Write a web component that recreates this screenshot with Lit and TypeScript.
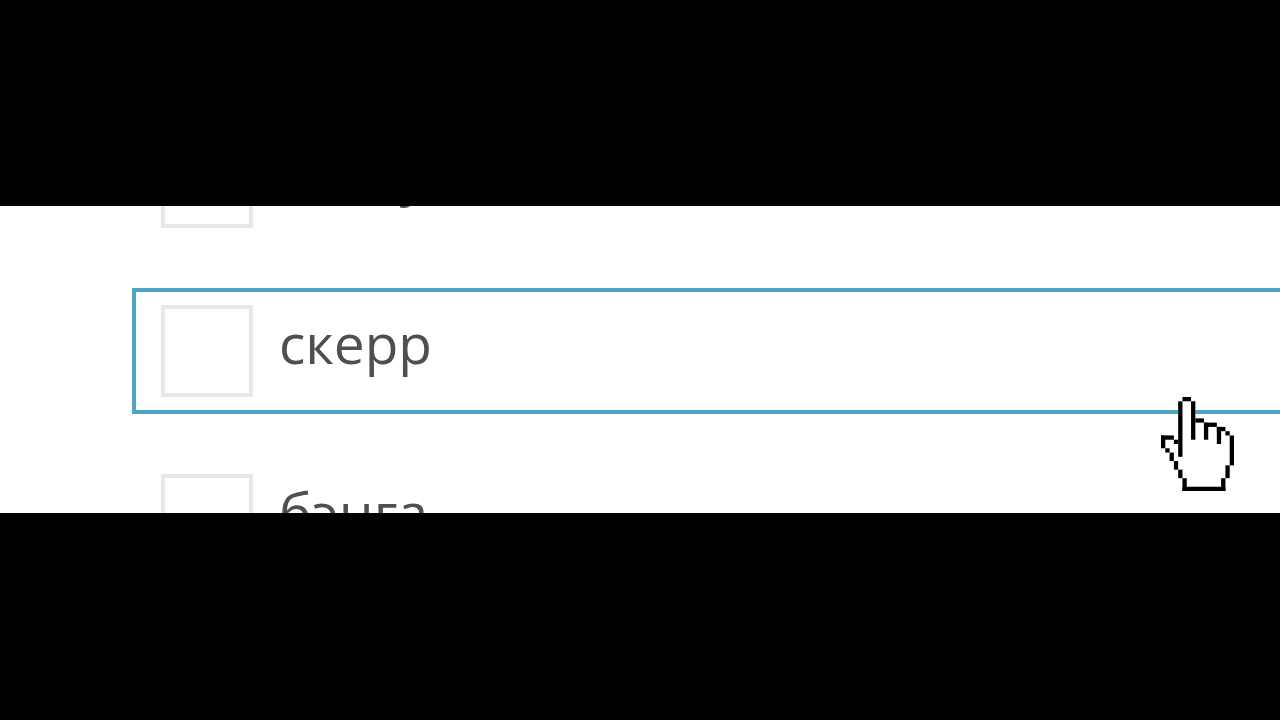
import { LitElement, html, css, svg } from "lit";
import { customElement, property, state } from "lit/decorators.js";
import { classMap } from "lit/directives/class-map.js";

const HAND_OUTLINE: [number, number, number, number][] = [
  [5, 0, 2, 1], [4, 1, 1, 13], [7, 1, 1, 9], [8, 5, 2, 1],
  [10, 6, 3, 1], [10, 6, 1, 4], [13, 7, 2, 1], [13, 7, 1, 4],
  [15, 8, 1, 1], [16, 9, 1, 7], [15, 16, 1, 3], [14, 19, 1, 3],
  [5, 21, 10, 1], [5, 19, 1, 3], [4, 17, 1, 2], [3, 15, 1, 2],
  [2, 13, 1, 2], [1, 12, 1, 1], [0, 9, 1, 3], [0, 9, 3, 1], [3, 10, 1, 1],
];

@customElement("check-option")
export class CheckOption extends LitElement {
  @property() label = "";
  @property({ type: Boolean }) active = false;

  static styles = css`
    :host {
      display: block;
    }
    .option {
      display: flex;
      align-items: center;
      gap: 26px;
      padding: 13px 25px;
      border: 4px solid transparent;
      border-right: 0;
      color: #4f4f52;
      font: 55px/76px "Open Sans", "Noto Sans", sans-serif;
      cursor: pointer;
    }
    .active {
      border-color: #4fa5c8;
    }
    .box {
      appearance: none;
      flex: none;
      box-sizing: border-box;
      width: 92px;
      height: 92px;
      margin: 0;
      border: 4px solid #e8e8e8;
      background: #fff;
    }
    .box:checked {
      background: #4fa5c8;
    }
    .text {
      padding-bottom: 16px;
    }
  `;

  render() {
    return html`<label class=${classMap({ option: true, active: this.active })}>
      <input class="box" type="checkbox" />
      <span class="text">${this.label}</span>
    </label>`;
  }
}

@customElement("app-root")
export class AppRoot extends LitElement {
  @state() private options = ["снеку", "скерр", "бэнга"];

  static styles = css`
    :host {
      display: flex;
      flex-direction: column;
      justify-content: center;
      box-sizing: border-box;
      min-height: 100vh;
      padding-bottom: 1px;
      background: #000;
    }
    .band {
      position: relative;
      height: 307px;
      overflow: hidden;
      background: #fff;
    }
    .list {
      display: flex;
      flex-direction: column;
      gap: 43px;
      margin-top: -87px;
      padding-left: 132px;
    }
    .hand {
      position: absolute;
      right: 46px;
      top: 191px;
      width: 73px;
      height: 94px;
      pointer-events: none;
    }
  `;

  render() {
    return html`<main class="band">
      <div class="list">
        ${this.options.map(
          (name, i) => html`<check-option .label=${name} .active=${i === 1}></check-option>`
        )}
      </div>
      <svg class="hand" viewBox="0 0 17 22" preserveAspectRatio="none" aria-hidden="true">
        <path
          fill="#fff"
          d="M5 0H7V1H8V5H10V6H13V7H15V8H16V9H17V16H16V19H15V22H5V19H4V17H3V15H2V13H1V12H0V9H3V10H4V1H5Z"
        />
        ${HAND_OUTLINE.map(
          ([x, y, w, h]) => svg`<rect x=${x} y=${y} width=${w} height=${h} />`
        )}
      </svg>
    </main>`;
  }
}
